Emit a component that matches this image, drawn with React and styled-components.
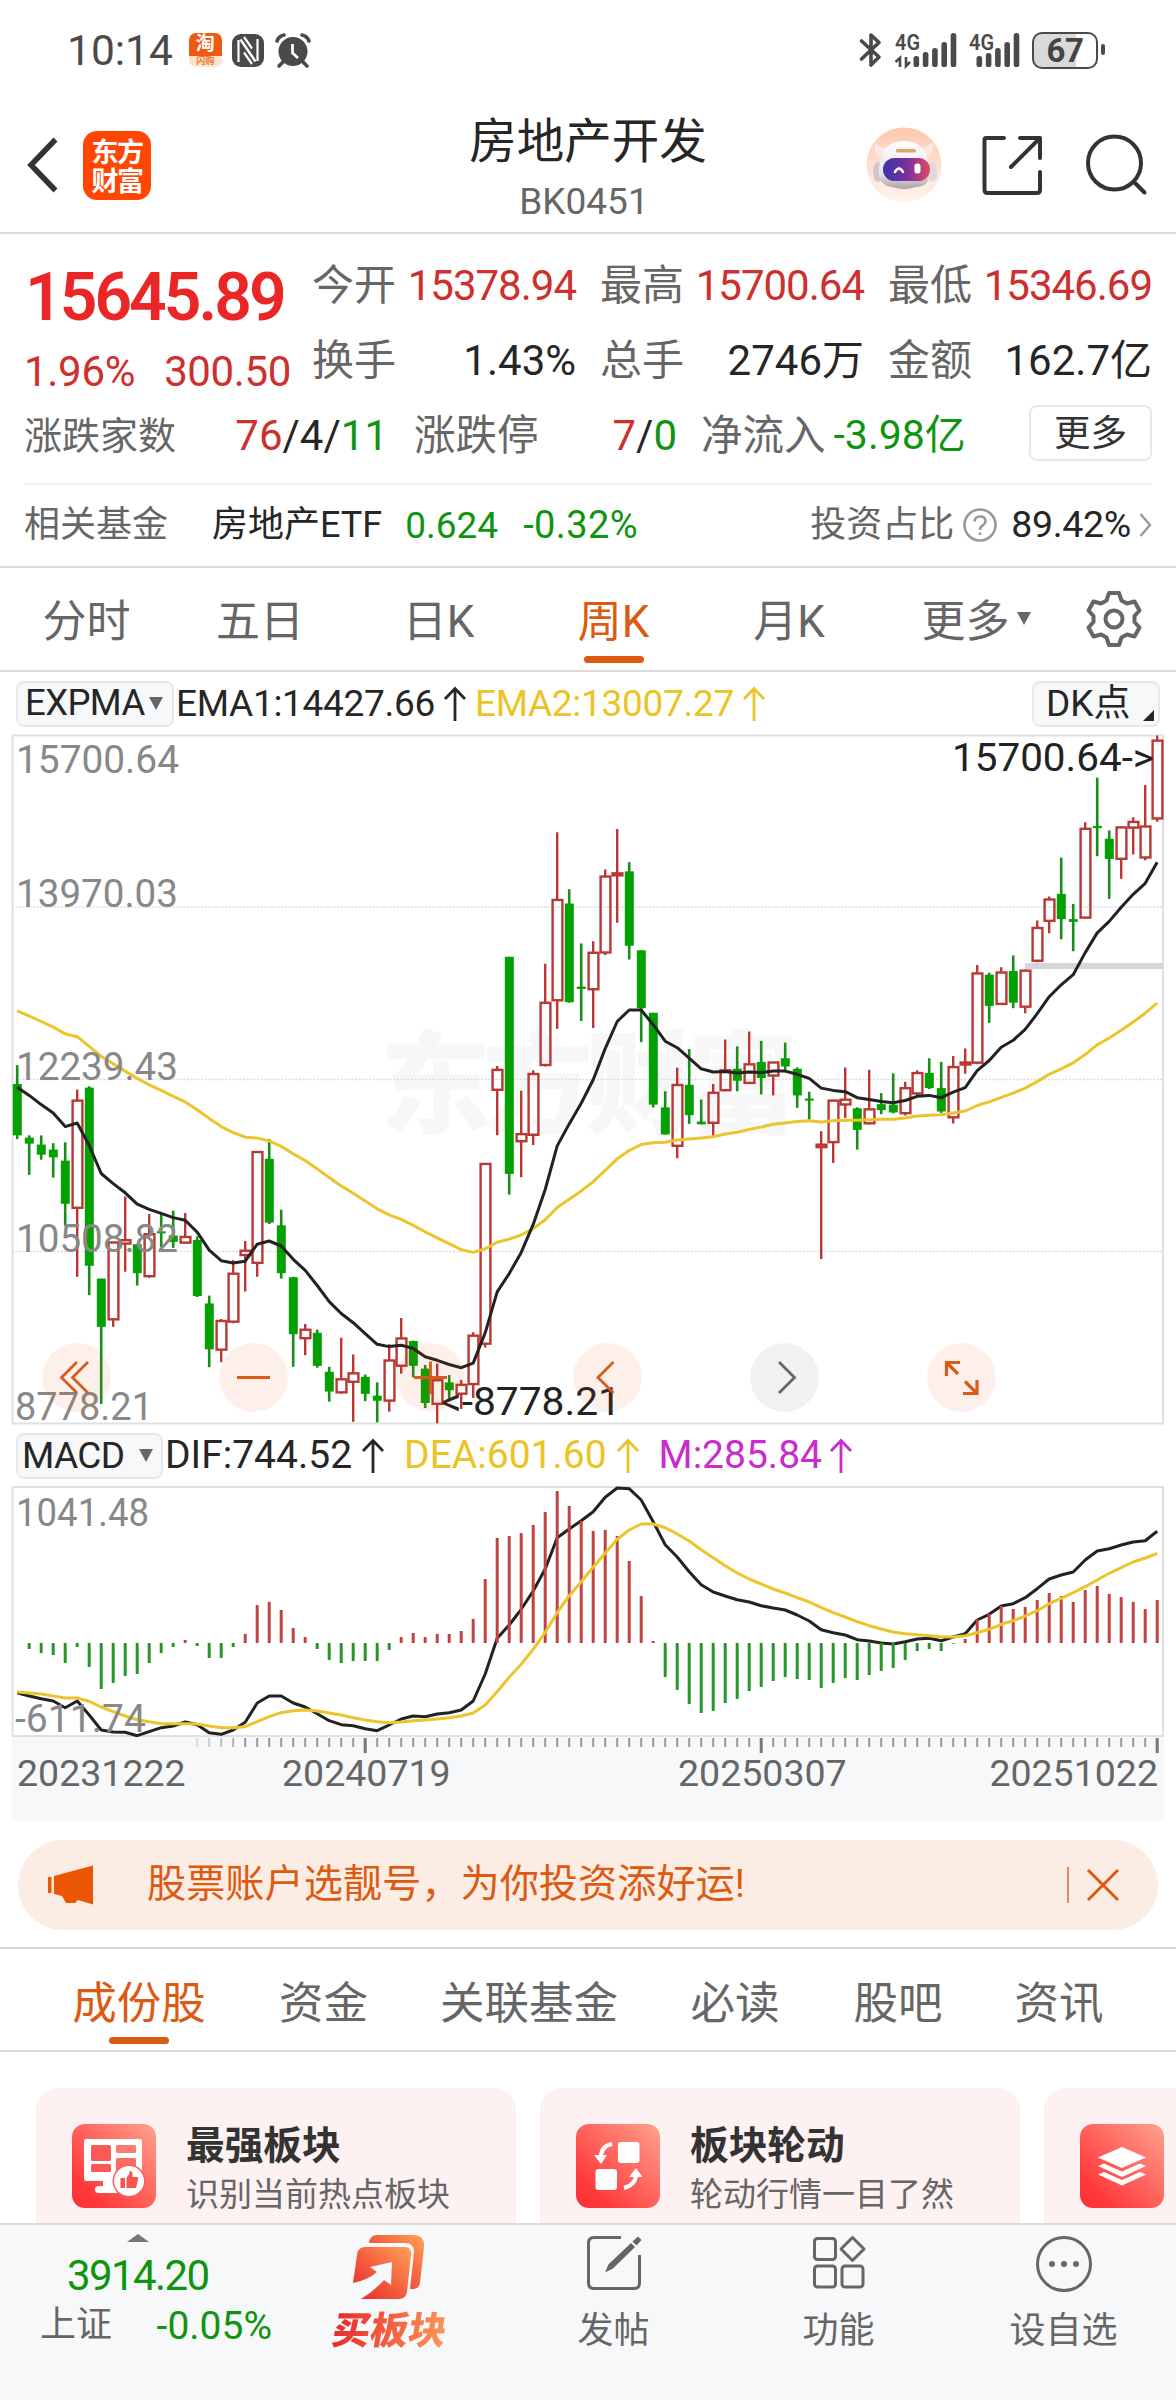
import React from "react";
import styled, { createGlobalStyle, css } from "styled-components";

const color = {
  ink: "#262626",
  dark: "#333",
  grey: "#666",
  mute: "#888",
  red: "#cc302f",
  up: "#ea2626",
  green: "#0f940f",
  orange: "#dc5a12",
  yellow: "#ecc327",
  purple: "#c92bcf",
  line: "#dadada",
  panel: "#f7f8fa",
};

const GlobalStyle = createGlobalStyle`
  * { box-sizing: border-box; }
  html, body { margin: 0; padding: 0; background: #fff; }
  body {
    width: 1176px;
    font-family: Roboto, "Noto Sans CJK SC", sans-serif;
    color: ${color.ink};
    -webkit-font-smoothing: antialiased;
  }
`;

const Screen = styled.main`
  width: 1176px;
  height: 2400px;
  display: flex;
  flex-direction: column;
  overflow: hidden;
  background: #fff;
`;

const Txt = styled.span`
  font-size: ${(p) => p.$s}px;
  color: ${(p) => p.$c || color.ink};
  letter-spacing: ${(p) => p.$ls || 0}px;
  margin-left: ${(p) => p.$ml || 0}px;
  margin-top: ${(p) => p.$mt || 0}px;
  font-weight: ${(p) => p.$w || 400};
  line-height: 1;
  white-space: nowrap;
`;

/* ---------- status bar ---------- */
const StatusBar = styled.div`
  height: 98px;
  flex: none;
  display: flex;
  align-items: center;
  padding: 2px 78px 0 67px;
`;
const StatusLeft = styled.div`
  display: flex;
  align-items: center;
`;
const StatusRight = styled(StatusLeft)`
  margin-left: auto;
`;
const TaoBadge = styled.div`
  width: 33px;
  height: 34px;
  margin-left: 16px;
  border-radius: 7px;
  overflow: hidden;
  display: flex;
  flex-direction: column;
  align-items: center;
  background: #fde3d0;
`;
const TaoTop = styled.span`
  width: 100%;
  height: 23px;
  background: #ef5a12;
  color: #fff;
  font-size: 19px;
  font-weight: 700;
  line-height: 22px;
  text-align: center;
`;
const TaoBottom = styled.span`
  font-size: 9px;
  font-weight: 700;
  line-height: 10px;
  color: #e8772e;
`;
const Gap = styled.svg`
  display: block;
  flex: none;
  overflow: visible;
  margin-left: ${(p) => p.$ml || 0}px;
`;
const Battery = styled.div`
  position: relative;
  width: 66px;
  height: 37px;
  margin-left: 12px;
  border: 2.5px solid #4a4a4a;
  border-radius: 10px;
  background: linear-gradient(90deg, #d9d9d9 67%, #fff 67%);
  display: flex;
  align-items: center;
  justify-content: center;
  &::after {
    content: "";
    position: absolute;
    right: -9px;
    top: 10px;
    width: 4px;
    height: 11px;
    border-radius: 2px;
    background: #4a4a4a;
  }
`;

/* ---------- header ---------- */
const Header = styled.header`
  height: 136px;
  flex: none;
  display: grid;
  grid-template-columns: 1fr 300px 1fr;
  border-bottom: 2px solid ${color.line};
`;
const HeaderLeft = styled.div`
  display: flex;
  align-items: center;
  padding: 0 0 0 26px;
`;
const BrandLogo = styled.div`
  width: 68px;
  height: 69px;
  margin-left: 25px;
  border-radius: 14px;
  background: #ff4603;
  color: #fff;
  font: 700 27px/29px "Noto Sans CJK SC", sans-serif;
  display: grid;
  grid-template-rows: 29px 29px;
  align-content: center;
  justify-content: center;
  letter-spacing: -1.5px;
`;
const HeaderTitle = styled.div`
  display: flex;
  flex-direction: column;
  align-items: center;
  padding-top: 21px;
`;
const HeaderRight = styled.div`
  display: flex;
  align-items: center;
  justify-content: flex-end;
  padding: 0 29px 0 0;
`;

/* ---------- quote ---------- */
const Quote = styled.section`
  flex: none;
  height: 334px;
  padding-top: 14px;
  border-bottom: 2px solid ${color.line};
`;
const QuoteGrid = styled.div`
  display: grid;
  grid-template-columns: repeat(4, 264px);
  grid-template-rows: 75px 75px;
  column-gap: 24px;
  padding-left: 24px;
`;
const PriceCell = styled.div`
  grid-row: span 2;
  padding-top: 17px;
`;
const PriceRow = styled.div`
  display: flex;
  margin-top: ${(p) => p.$mt || 0}px;
  padding-left: ${(p) => p.$pl || 0}px;
`;
const Pair = styled.div`
  display: flex;
  align-items: center;
  justify-content: space-between;
`;
const StatRow = styled.div`
  height: 75px;
  display: flex;
  align-items: center;
  padding: 0 24px;
`;
const StatPair = styled(Pair)`
  width: ${(p) => p.$w}px;
  margin-right: ${(p) => p.$mr}px;
`;
const MoreButton = styled.button`
  width: 123px;
  height: 56px;
  margin: -6px 0 0 auto;
  padding: 0 0 3px;
  background: #fff;
  border: 2px solid #e8e8e8;
  border-radius: 8px;
  font: 36.5px/1 "Noto Sans CJK SC", sans-serif;
  color: ${color.dark};
`;
const FundRow = styled.div`
  height: 82px;
  margin: 10px 24px 0;
  border-top: 2px solid #f4f4f4;
  display: flex;
  align-items: center;
`;
const FundRight = styled.div`
  margin-left: auto;
  display: flex;
  align-items: center;
`;

/* ---------- period tabs ---------- */
const PeriodTabs = styled.nav`
  flex: none;
  height: 104px;
  display: flex;
  align-items: center;
  border-bottom: 2px solid ${color.line};
`;
const tabMark = css`
  &::after {
    content: "";
    position: absolute;
    left: 50%;
    bottom: ${(p) => p.$drop}px;
    width: 60px;
    height: 7px;
    margin-left: -30px;
    border-radius: 4px;
    background: ${color.orange};
  }
`;
const Tab = styled.a`
  position: relative;
  height: 100%;
  display: flex;
  align-items: center;
  justify-content: center;
  width: ${(p) => p.$w}px;
  padding-bottom: ${(p) => p.$pb || 0}px;
  font-size: ${(p) => p.$s}px;
  color: ${(p) => (p.$on ? color.orange : color.grey)};
  white-space: nowrap;
  ${(p) => p.$on && tabMark}
`;
const Down = styled.i`
  margin-left: ${(p) => p.$ml || 7}px;
  border: 7.5px solid transparent;
  border-top: 13px solid ${color.grey};
  border-bottom: 0;
`;

/* ---------- indicators ---------- */
const IndicatorRow = styled.div`
  flex: none;
  height: ${(p) => p.$h}px;
  display: flex;
  align-items: center;
  padding: 0 16px;
`;
const Chip = styled.button`
  position: relative;
  width: ${(p) => p.$w}px;
  height: 46px;
  margin-left: ${(p) => p.$ml || 0};
  padding: 0 0 0 ${(p) => p.$pl}px;
  display: flex;
  align-items: center;
  background: #f6f8fa;
  border: 2px solid #e6e8eb;
  border-radius: 8px;
  font: 37px/1 Roboto, "Noto Sans CJK SC", sans-serif;
  color: ${color.ink};
`;
const Corner = styled.i`
  position: absolute;
  right: 4px;
  bottom: 4px;
  border-left: 11px solid transparent;
  border-bottom: 11px solid ${color.ink};
`;
const ChartSvg = styled.svg`
  display: block;
  flex: none;
  overflow: visible;
  font-family: Roboto, sans-serif;
`;
const Watermark = styled.text`
  font: 900 111px "Noto Sans CJK SC", sans-serif;
  fill: #f7f7f7;
`;
const Axis = styled.div`
  flex: none;
  height: 84px;
  margin: 0 12px;
  background: #f7f8fa;
`;
const AxisLabels = styled.div`
  display: grid;
  grid-template-columns: 265px 396px 1fr auto;
  padding: 1px 6px 0 5px;
`;

/* ---------- notice ---------- */
const Notice = styled.div`
  flex: none;
  height: 90px;
  margin: 19px 18px 17px;
  padding: 0 38px 0 28px;
  border-radius: 45px;
  background: #fcede4;
  display: flex;
  align-items: center;
`;
const NoticeRule = styled.i`
  width: 2px;
  height: 36px;
  margin: 0 17px 0 auto;
  background: #e38a5c;
`;

/* ---------- section tabs + cards ---------- */
const SectionTabs = styled.nav`
  flex: none;
  height: 105px;
  display: flex;
  border-top: 2px solid ${color.line};
  border-bottom: 2px solid ${color.line};
  padding-left: 40px;
`;
const Cards = styled.section`
  flex: 1;
  min-height: 0;
  overflow: hidden;
  display: flex;
  gap: 24px;
  padding: 36px 0 0 36px;
`;
const Card = styled.article`
  flex: none;
  width: 480px;
  height: 156px;
  border-radius: 22px;
  background: #fdf1f1;
  display: flex;
  padding: 36px;
`;
const CardText = styled.div`
  display: flex;
  flex-direction: column;
  gap: 12px;
  padding-top: 3px;
  margin-left: 30px;
`;

/* ---------- bottom bar ---------- */
const BottomBar = styled.footer`
  flex: none;
  height: 177px;
  display: flex;
  background: ${color.panel};
  border-top: 2px solid ${color.line};
`;
const IndexCell = styled.div`
  width: 276px;
  display: flex;
  flex-direction: column;
  align-items: center;
  padding-top: 9px;
`;
const IndexRow = styled.div`
  width: 232px;
  margin: ${(p) => p.$mt}px 0 0 36px;
  display: flex;
  justify-content: space-between;
`;
const UpCaret = styled.i`
  border: 11px solid transparent;
  border-bottom: 8px solid #777;
  border-top: 0;
`;
const NavItem = styled.a`
  width: 225px;
  display: flex;
  flex-direction: column;
  align-items: center;
  padding-top: 10px;
`;
const NavLabel = styled.span`
  margin-top: ${(p) => p.$mt || 22}px;
  font-size: 36px;
  line-height: 1;
  color: ${color.grey};
`;
const BuyLabel = styled.span`
  margin: 6px 0 0 3px;
  padding: 0 4px;
  font: 900 38px/44px "Noto Sans CJK SC", sans-serif;
  transform: skewX(-9deg);
  color: transparent;
  background: linear-gradient(90deg, #e7252a, #ff9a56);
  background-clip: text;
  -webkit-background-clip: text;
`;

/* Each candle: [direction, high, body top, body bottom, low] */
const candles = [
  ["g",752,793,905,913],["g",905,910,923,991],["g",905,925,947,958],["g",922,936,953,997],
  ["g",920,960,1054,1102],["r",805,828,1064,1213],["g",798,801,1189,1253],["g",1217,1217,1322,1490],
  ["r",1137,1137,1307,1322],["r",1038,1132,1142,1202],["g",1142,1142,1205,1232],["r",1076,1119,1213,1215],
  ["g",1075,1114,1118,1148],["g",1069,1123,1137,1150],["r",1074,1125,1140,1140],["g",1125,1133,1255,1257],
  ["g",1254,1271,1371,1410],["r",1305,1308,1373,1399],["r",1177,1205,1312,1314],["r",1135,1155,1167,1245],
  ["r",940,940,1184,1213],["g",913,956,1095,1098],["g",1067,1101,1205,1217],["g",1213,1214,1338,1409],
  ["r",1316,1327,1348,1384],["g",1328,1335,1407,1411],["g",1409,1420,1463,1485],["r",1346,1435,1466,1467],
  ["r",1382,1422,1443,1529],["g",1426,1431,1468,1484],["g",1443,1472,1483,1530],["r",1360,1394,1484,1507],
  ["r",1303,1346,1408,1424],["g",1352,1353,1407,1432],["g",1405,1413,1488,1499],["r",1402,1437,1491,1532],
  ["g",1427,1443,1460,1482],["r",1438,1447,1469,1501],["r",1334,1340,1448,1477],["r",966,966,1360,1367],
  ["r",754,761,807,905],["g",516,516,989,1034],["r",808,901,919,996],["r",763,770,905,926],
  ["r",531,615,753,755],["r",245,391,612,673],["g",369,400,615,616],["g",487,581,586,656],
  ["r",482,506,588,671],["r",326,340,508,512],["r",238,333,340,442],["g",310,330,492,522],
  ["g",502,502,628,702],["g",638,638,838,844],["g",809,844,903,903],["r",758,794,929,955],
  ["g",717,795,861,880],["g",827,875,881,881],["r",793,811,879,910],["r",696,762,808,809],
  ["g",711,760,786,809],["r",679,749,792,792],["g",699,745,780,816],["r",745,745,776,818],
  ["g",703,737,755,766],["g",757,760,818,845],["g",810,825,829,871],["r",896,924,932,1174],
  ["r",828,828,921,965],["r",757,826,839,867],["g",844,846,893,936],["r",762,847,880,881],
  ["g",813,837,850,859],["g",770,838,855,857],["r",788,801,858,862],["r",763,768,815,817],
  ["g",737,769,802,804],["g",745,802,853,856],["r",732,755,867,879],["r",716,745,752,771],
  ["r",534,551,748,750],["g",551,555,623,660],["r",539,549,620,621],["g",513,547,616,628],
  ["r",544,545,626,639],["r",437,452,526,528],["r",385,390,439,465],["g",300,379,434,478],
  ["g",401,434,440,504],["r",223,236,432,433],["g",126,231,236,297],["g",241,259,303,390],
  ["r",232,233,304,346],["r",212,221,236,293],["r",142,231,301,306],["r",34,44,216,222],
];
const ema1 = [800,818,838,856,886,878,927,988,1010,1030,1055,1066,1075,1084,1090,1116,1155,1178,1183,1179,1142,1135,1146,1175,1199,1232,1267,1293,1313,1337,1360,1365,1362,1369,1387,1395,1404,1411,1401,1335,1246,1206,1160,1099,1023,928,880,835,784,716,657,632,632,664,700,714,737,760,767,766,769,767,768,765,765,772,781,802,807,810,823,827,831,834,829,820,818,823,811,801,764,742,713,698,674,640,603,577,555,507,464,439,408,380,356,310];
const ema2 = [634,645,657,669,684,690,711,733,749,765,781,795,807,820,832,849,868,886,899,909,911,917,929,945,960,978,997,1015,1031,1048,1065,1078,1088,1101,1115,1128,1141,1154,1160,1152,1138,1131,1122,1108,1089,1062,1044,1026,1006,981,956,938,925,921,920,915,913,911,908,902,898,892,887,881,878,875,873,876,873,872,872,871,870,870,867,863,861,860,856,852,840,832,822,813,802,788,772,760,747,729,708,693,676,658,639,617];
const macd = [669,687,699,705,729,681,741,807,789,768,762,729,699,681,660,678,714,714,681,642,555,546,570,624,651,687,720,729,723,723,723,690,651,639,651,642,642,633,597,477,354,348,339,315,276,213,258,303,333,330,348,423,528,663,771,810,852,879,873,849,837,813,801,783,771,777,780,804,789,774,780,765,753,744,720,693,687,693,671,657,598,582,558,567,561,540,519,528,546,510,498,522,531,546,567,540];
const dif = [818,828,836,843,863,843,885,930,936,937,947,935,923,918,906,914,938,943,930,907,849,828,828,849,861,881,902,914,917,926,932,915,897,888,890,882,878,870,843,762,655,615,568,513,447,353,327,302,275,232,204,206,240,305,374,411,455,494,516,528,539,546,557,564,570,585,603,629,638,645,659,663,669,672,665,657,655,662,651,641,600,583,558,551,533,506,477,465,456,420,393,386,375,366,362,334];
const dea = [816,819,822,828,834,834,844,861,875,888,899,905,911,911,911,912,918,923,923,920,905,890,878,872,870,873,879,885,893,900,905,908,906,902,900,897,893,888,879,855,815,772,733,688,637,578,527,485,441,400,358,330,312,312,323,342,363,389,413,437,459,477,492,507,519,533,546,563,578,591,605,617,627,636,641,644,647,650,651,647,638,628,613,602,588,572,551,535,518,500,480,460,443,426,414,400];

const X = (i) => 17.2 + 12 * i;
const Y = (v) => (v - 33) / 2.178;
const M = (v) => (v - 201) / 3 + 1;
const line = (arr, fn) => arr.map((v, i) => `${X(i)},${fn(v).toFixed(1)}`).join(" ");

const Fit = ({ x, y, w, c = color.mute, children }) => (
  <text x={x} y={y} fontSize="38.5" fill={c} textLength={w} lengthAdjust="spacingAndGlyphs">
    {children}
  </text>
);

function KLine() {
  return (
    <ChartSvg width="1176" height="690" viewBox="0 0 1176 690">
      <Watermark x="380" y="390" textLength="418">东方财富</Watermark>
      <rect x="12.5" y="0.5" width="1150.5" height="688" fill="none" stroke="#e0e0e0" strokeWidth="2" />
      {[172, 344.5, 516.5].map((y) => (
        <line key={y} x1="12" x2="1163" y1={y} y2={y} stroke="#dcdcdc" strokeWidth="1.3" strokeDasharray="2 1.5" />
      ))}
      <rect x="1025" y="228" width="138" height="6" fill="#d4d6db" />
      {candles.map(([d, h, t, b, l], i) => {
        const x = X(i);
        const top = Y(t);
        const bot = Y(b);
        if (d === "g")
          return (
            <g key={i} fill="#04a004">
              <rect x={x - 1.3} y={Y(h)} width="2.6" height={Y(l) - Y(h)} fill="#16901a" />
              <rect x={x - 4.4} y={top} width="9" height={Math.max(2, bot - top)} />
            </g>
          );
        return (
          <g key={i} fill="none" stroke="#b93734" strokeWidth="2.4">
            <path d={`M${x} ${Y(h)}V${top}M${x} ${bot}V${Y(l)}`} />
            <rect x={x - 4.6} y={top + 0.6} width="9.8" height={Math.max(1.6, bot - top - 1.2)} />
          </g>
        );
      })}
      <polyline points={line(ema2, Y)} fill="none" stroke="#ecc42c" strokeWidth="3" strokeLinejoin="round" />
      <polyline points={line(ema1, Y)} fill="none" stroke="#222" strokeWidth="3" strokeLinejoin="round" />
      <Fit x="16" y="38" w="163">15700.64</Fit>
      <Fit x="16" y="172" w="162">13970.03</Fit>
      <Fit x="16" y="344.5" w="162">12239.43</Fit>
      <Fit x="16" y="517" w="162">10508.82</Fit>
      <Fit x="15" y="685" w="138">8778.21</Fit>
      <Fit x="952" y="36" w="202" c="#222">15700.64-&gt;</Fit>
      <Fit x="441" y="680" w="180" c="#222">&lt;-8778.21</Fit>
      {[76.5, 253.5, 430.5, 607.5, 784.5, 961.5].map((cx) => (
        <circle key={cx} cx={cx} cy="642.5" r="34.4" fill={cx === 784.5 ? "rgba(0,0,0,.055)" : "rgba(236,84,10,.085)"} />
      ))}
      <g fill="none" stroke="#d65c1c" strokeWidth="2.8">
        <path d="M77 627L61.5 642.5L77 658M88 627L72.5 642.5L88 658" />
        <path d="M237 642.5H270" />
        <path d="M414 642.5H447M430.5 626.500V659" />
        <path d="M613.500 627L598 642.5L613.500 658" />
        <path d="M779 627L794.5 642.5L779 658" stroke="#666" />
        <path d="M960 627.500H946.500V641M947 628L958 639M963 658.500H977V645M976.500 658L965 646.500" strokeWidth="3.2" />
      </g>
    </ChartSvg>
  );
}

function Macd() {
  return (
    <ChartSvg width="1176" height="251" viewBox="0 0 1176 251">
      <rect x="12.5" y="1" width="1150.5" height="249" fill="none" stroke="#e0e0e0" strokeWidth="2" />
      <polyline points={line(dif, M)} fill="none" stroke="#222" strokeWidth="3" strokeLinejoin="round" />
      {macd.map((v, i) => {
        const up = v < 669;
        const h = Math.abs(v - 669) / 3;
        return (
          <rect key={i} x={X(i) - 1.5} y={up ? M(v) : 157} width="3" height={h} fill={up ? "#c04340" : "#25962a"} />
        );
      })}
      <polyline points={line(dea, M)} fill="none" stroke="#ecc42c" strokeWidth="3" strokeLinejoin="round" />
      <Fit x="16" y="40" w="133">1041.48</Fit>
      <Fit x="15" y="246" w="131">-611.74</Fit>
    </ChartSvg>
  );
}

function Ticks() {
  return (
    <Gap width="1152" height="17" viewBox="12 0 1152 17">
      {Array.from({ length: 81 }, (_, k) => {
        const i = k + 15;
        const big = i === 29 || i === 62 || i === 95;
        return (
          <rect key={i} x={X(i) - (big ? 1.5 : 1)} y="1" width={big ? 3 : 2} height={big ? 15 : 9} fill={big ? "#777" : "#999"} opacity={k < 4 ? 0.3 + k * 0.15 : 1} />
        );
      })}
    </Gap>
  );
}

const Arrow = ({ c, ml = 10, h = 34 }) => (
  <Gap $ml={ml} width="22" height={h} viewBox="0 0 22 34" fill="none" stroke={c} strokeWidth="2.8">
    <path d="M11 34V1M1 12L11 1.500L21 12" />
  </Gap>
);

const Bars = ({ heights, w }) => (
  <g fill="#4a4a4a">
    {heights.map((h, i) => (
      <rect key={i} x={w + i * 9.300} y={34 - h} width="5.6" height={h} rx="2.600" />
    ))}
  </g>
);

function StatusIcons() {
  return (
    <>
      <Gap width="24" height="34" viewBox="0 0 24 34" fill="none" stroke="#4a4a4a" strokeWidth="3.6" strokeLinejoin="round" strokeLinecap="round">
        <path d="M2.500 8L20 24L12 32V2L20 9.500L2.500 26" />
      </Gap>
      <Gap $ml={12} width="63" height="34" viewBox="0 0 63 34">
        <text x="0" y="17" fontSize="22" fontWeight="600" fill="#4a4a4a" textLength="25" lengthAdjust="spacingAndGlyphs">4G</text>
        <path d="M5 34V25L0.500 29M11 24V33L15 29" fill="none" stroke="#4a4a4a" strokeWidth="2.6" />
        <Bars w={18.500} heights={[11, 15, 19, 25, 34]} />
      </Gap>
      <Gap $ml={11} width="51" height="34" viewBox="0 0 51 34">
        <text x="0" y="17" fontSize="22" fontWeight="600" fill="#4a4a4a" textLength="25" lengthAdjust="spacingAndGlyphs">4G</text>
        <Bars w={7.500} heights={[11, 14, 19, 25, 34]} />
      </Gap>
    </>
  );
}

function Robot() {
  return (
    <Gap width="76" height="76" viewBox="0 0 76 76">
      <defs>
        <linearGradient id="halo" x1="0" y1="0" x2="0" y2="1">
          <stop offset="0" stopColor="#fdc9ae" />
          <stop offset="1" stopColor="#fff5ef" />
        </linearGradient>
        <linearGradient id="visor" x1="0" y1="0" x2="1" y2="0">
          <stop offset="0" stopColor="#3c35a8" />
          <stop offset=".5" stopColor="#7a2f9c" />
          <stop offset="1" stopColor="#e04a62" />
        </linearGradient>
        <linearGradient id="shell" x1="0" y1="0" x2="0" y2="1">
          <stop offset="0" stopColor="#fff" />
          <stop offset=".7" stopColor="#e6e1e4" />
          <stop offset="1" stopColor="#a8a0a6" />
        </linearGradient>
      </defs>
      <circle cx="38" cy="38" r="37.500" fill="url(#halo)" />
      <path d="M13 30Q6 24 10 16Q14 22 22 20ZM62 30Q69 24 66 15Q61 22 53 20Z" fill="#fbe9e3" />
      <ellipse cx="12" cy="45" rx="5" ry="10" fill="#cfc7cc" />
      <ellipse cx="66" cy="45" rx="5" ry="10" fill="#e0d8dc" />
      <path d="M14 34Q18 14 38 14Q58 14 62 34Q68 60 50 60Q38 64 26 60Q9 58 14 34Z" fill="url(#shell)" />
      <rect x="30" y="22" width="20" height="3.500" rx="1.500" fill="#e0a26e" />
      <rect x="17" y="31" width="47" height="23" rx="11.500" fill="url(#visor)" />
      <path d="M29 45Q33 38 37 45" fill="none" stroke="#fff" strokeWidth="2.5" strokeLinecap="round" />
      <rect x="48.500" y="36.500" width="6" height="10" rx="2.500" fill="#fff" />
    </Gap>
  );
}

const iconGrad = (id) => (
  <defs>
    <linearGradient id={id} x1="0" y1="1" x2="1" y2="0">
      <stop offset="0" stopColor="#ff2c33" />
      <stop offset=".2" stopColor="#ff3a3c" />
      <stop offset="1" stopColor="#ffa28e" />
    </linearGradient>
  </defs>
);

const BoardIcon = () => (
  <Gap width="84" height="84" viewBox="0 0 84 84">
    {iconGrad("b1")}
    <rect width="84" height="84" rx="13" fill="url(#b1)" />
    <rect x="12" y="15" width="58" height="42" rx="2.500" fill="#fff" />
    <g fill="#fb5955">
      <rect x="19" y="21" width="20" height="16" rx="1.500" />
      <rect x="44" y="21" width="20" height="8" rx="1.500" fill="#fd7a70" />
      <rect x="44" y="34" width="20" height="17" rx="1.500" fill="#fd6c64" />
      <rect x="19" y="40" width="20" height="8" rx="1.500" />
    </g>
    <path d="M27 57H38V60H27Z" fill="#fd5451" />
    <rect x="31" y="57" width="11" height="8" fill="#fff" />
    <rect x="23" y="62" width="30" height="7" rx="3.500" fill="#fff" />
    <circle cx="57" cy="57" r="16.500" fill="#fb5f5a" />
    <circle cx="57" cy="57" r="15" fill="#fff" />
    <path d="M48.500 54H53V64H48.500ZM54.500 54L57.500 49.500V47Q60.500 46.500 60.500 50V53H65.500Q66.500 53.500 65.500 58L64 64H54.500Z" fill="#f9534f" />
  </Gap>
);

const RotateIcon = () => (
  <Gap width="84" height="84" viewBox="0 0 84 84">
    {iconGrad("b2")}
    <rect width="84" height="84" rx="13" fill="url(#b2)" />
    <g fill="#fff">
      <rect x="42" y="18" width="21.500" height="21" rx="3" />
      <rect x="19.500" y="45" width="21.500" height="21" rx="3" />
      <path d="M18 31H31L25 40ZM53 53H66.500L60 44Z" />
    </g>
    <path d="M25 32Q25.500 22 36 20M60 52Q59 61 48 64" fill="none" stroke="#fff" strokeWidth="4" />
  </Gap>
);

const StackIcon = () => (
  <Gap width="84" height="84" viewBox="0 0 84 84">
    {iconGrad("b3")}
    <rect width="84" height="84" rx="13" fill="url(#b3)" />
    <g fill="#fff">
      <path d="M42 23L66 33.500L42 44L18 33.500Z" />
      <path d="M18 42L24 39.500L42 47.500L60 39.500L66 42L42 53Z" />
      <path d="M18 50.500L24 48L42 56L60 48L66 50.500L42 61.500Z" />
    </g>
  </Gap>
);

const BuyIcon = () => (
  <Gap width="72" height="65" viewBox="0 0 72 65">
    <defs>
      <linearGradient id="buy" x1="0" y1="1" x2="1" y2="0">
        <stop offset="0" stopColor="#e8252a" />
        <stop offset=".5" stopColor="#f4603f" />
        <stop offset="1" stopColor="#ffa255" />
      </linearGradient>
    </defs>
    <path d="M16 8Q17 0 24 0H60Q72 0 71 12L67 48Q66 54 60 54H57L61 17Q61 8 52 8Z" fill="url(#buy)" />
    <path d="M4 20Q5 12 12 12H52Q59 12 58 20L54 57Q53 64 46 64H8Q20 57 31 45L38 50L39 27L17 32L24 37Q15 45 0 48Z" fill="url(#buy)" />
  </Gap>
);

export default function App() {
  return (
    <Screen>
      <GlobalStyle />
      <StatusBar>
        <StatusLeft>
          <Txt $s={42.5} $c="#4a4a4a" $mt={2}>10:14</Txt>
          <TaoBadge>
            <TaoTop>淘</TaoTop>
            <TaoBottom>闪购</TaoBottom>
          </TaoBadge>
          <Gap $ml={10} width="32" height="33" viewBox="0 0 32 33">
            <rect width="32" height="33" rx="9" fill="#4a4a4a" />
            <path d="M6.500 28V6M25.500 27V5" fill="none" stroke="#fff" strokeWidth="2.200" />
            <path d="M8.500 5.500L23.500 27.500" stroke="#fff" strokeWidth="2.400" />
            <path d="M12 3L20 14.500M12 18.500L20 30" stroke="#fff" strokeWidth="2.200" />
          </Gap>
          <Gap $ml={11} width="36" height="35" viewBox="0 0 36 35">
            <circle cx="18" cy="18.500" r="14.500" fill="#4a4a4a" />
            <path d="M2 8Q4 3 9 2M34 8Q32 3 27 2M8 29L4 33M28 29L32 33" stroke="#4a4a4a" strokeWidth="3.600" fill="none" strokeLinecap="round" />
            <path d="M17.500 11V20L23 25" stroke="#fff" strokeWidth="2.800" fill="none" />
          </Gap>
        </StatusLeft>
        <StatusRight>
          <StatusIcons />
          <Battery>
            <Txt $s={33} $c="#444" $w={700} $ls={-0.5}>67</Txt>
          </Battery>
        </StatusRight>
      </StatusBar>

      <Header>
        <HeaderLeft>
          <Gap width="32" height="56" viewBox="0 0 32 56" fill="none" stroke="#333" strokeWidth="5.500">
            <path d="M29.500 2.500L5 28L29.500 53.500" />
          </Gap>
          <BrandLogo>
            <span>东方</span>
            <span>财富</span>
          </BrandLogo>
        </HeaderLeft>
        <HeaderTitle>
          <Txt $s={47.5}>房地产开发</Txt>
          <Txt $s={37} $c={color.grey} $ml={-8} $mt={16}>BK0451</Txt>
        </HeaderTitle>
        <HeaderRight>
          <Robot />
          <Gap $ml={40} width="62" height="62" viewBox="0 0 62 62" fill="none" stroke="#333" strokeWidth="4" strokeLinejoin="round" strokeLinecap="round">
            <path d="M22 4H4Q2.500 4 2.500 6V56Q2.500 59 5.500 59H55Q58 59 58 56V38M38 4H58V24M57 5L29 33" />
          </Gap>
          <Gap $ml={41} width="62" height="62" viewBox="0 0 62 62" fill="none" stroke="#333" strokeWidth="4" strokeLinecap="round">
            <circle cx="29.500" cy="29" r="26.500" />
            <path d="M49 48L59.500 58.500" />
          </Gap>
        </HeaderRight>
      </Header>

      <Quote>
        <QuoteGrid>
          <PriceCell>
            <PriceRow $pl={1}>
              <Txt $s={66} $c={color.up} $w={600} $ls={-3}>15645.89</Txt>
            </PriceRow>
            <PriceRow $mt={20}>
              <Txt $s={42} $c={color.red} $ls={-0.3}>1.96%</Txt>
              <Txt $s={42} $c={color.red} $ls={-0.4} $ml={29}>300.50</Txt>
            </PriceRow>
          </PriceCell>
          <Pair><Txt $s={42} $c={color.grey}>今开</Txt><Txt $s={42} $c={color.red} $ls={-1}>15378.94</Txt></Pair>
          <Pair><Txt $s={42} $c={color.grey}>最高</Txt><Txt $s={42} $c={color.red} $ls={-1}>15700.64</Txt></Pair>
          <Pair><Txt $s={42} $c={color.grey}>最低</Txt><Txt $s={42} $c={color.red} $ls={-1}>15346.69</Txt></Pair>
          <Pair><Txt $s={42} $c={color.grey}>换手</Txt><Txt $s={42}>1.43%</Txt></Pair>
          <Pair><Txt $s={42} $c={color.grey}>总手</Txt><Txt $s={42}>2746万</Txt></Pair>
          <Pair><Txt $s={42} $c={color.grey}>金额</Txt><Txt $s={42}>162.7亿</Txt></Pair>
        </QuoteGrid>
        <StatRow>
          <StatPair $w={364} $mr={26}>
            <Txt $s={38} $c={color.grey}>涨跌家数</Txt>
            <span>
              <Txt $s={42} $c={color.red}>76</Txt><Txt $s={42}>/4/</Txt><Txt $s={42} $c={color.green}>11</Txt>
            </span>
          </StatPair>
          <StatPair $w={263} $mr={24}>
            <Txt $s={41.5} $c={color.grey}>涨跌停</Txt>
            <span>
              <Txt $s={42} $c={color.red}>7</Txt><Txt $s={42}>/</Txt><Txt $s={42} $c={color.green}>0</Txt>
            </span>
          </StatPair>
          <Txt $s={41.5} $c={color.grey}>净流入</Txt>
          <Txt $s={41} $c={color.green} $ml={8}>-3.98亿</Txt>
          <MoreButton>更多</MoreButton>
        </StatRow>
        <FundRow>
          <Txt $s={36} $c={color.grey}>相关基金</Txt>
          <Txt $s={36} $ml={44}>房地产ETF</Txt>
          <Txt $s={37} $c={color.green} $ml={23}>0.624</Txt>
          <Txt $s={38} $c={color.green} $ml={25} $ls={0.4}>-0.32%</Txt>
          <FundRight>
            <Txt $s={36} $c={color.grey}>投资占比</Txt>
            <Gap $ml={8} width="36" height="36" viewBox="0 0 36 36" fill="none" stroke="#999" strokeWidth="2.600">
              <circle cx="18" cy="18" r="15.500" />
              <path d="M12.500 14.500Q13 9.500 18 9.500Q23.500 9.500 23.500 14Q23.500 16.500 20.500 18.500Q18 20 18 23M18 25.500V28" />
            </Gap>
            <Txt $s={37.5} $ml={13} $ls={-0.3}>89.42%</Txt>
            <Gap $ml={8} width="13" height="26" viewBox="0 0 13 26" fill="none" stroke="#999" strokeWidth="2.400">
              <path d="M1.500 2L11 13L1.500 24" />
            </Gap>
          </FundRight>
        </FundRow>
      </Quote>

      <PeriodTabs>
        <Tab $w={173} $pb={2} $s={44}>分时</Tab>
        <Tab $w={174} $pb={2} $s={44}>五日</Tab>
        <Tab $w={183} $pb={2} $s={44}>日K</Tab>
        <Tab $w={167} $pb={2} $s={44} $on $drop={7}>周K</Tab>
        <Tab $w={184} $pb={2} $s={44}>月K</Tab>
        <Tab $w={190} $pb={2} $s={44}>更多<Down /></Tab>
        <Gap $ml={15} width="56" height="58" viewBox="0 0 56 58" fill="none" stroke="#666" strokeWidth="4" strokeLinejoin="round">
          <path d="M23 3H33L35.500 10.500L41 13.500L48.500 11.500L53.500 20.500L48.500 26V32L53.500 37.500L48.500 46.500L41 44.500L35.500 47.500L33 55H23L20.500 47.500L15 44.500L7.500 46.500L2.500 37.500L7.500 32V26L2.500 20.500L7.500 11.500L15 13.500L20.500 10.500Z" />
          <circle cx="28" cy="29" r="8.500" />
        </Gap>
      </PeriodTabs>

      <IndicatorRow $h={63}>
        <Chip $w={158} $pl={7}>
          <Txt $s={36.5} $ls={-0.6}>EXPMA</Txt><Down $ml={4} />
        </Chip>
        <Txt $s={37} $ml={2} $ls={-0.3}>EMA1:14427.66</Txt><Arrow c={color.ink} ml={9} />
        <Txt $s={37} $ml={9} $ls={-0.3} $c={color.yellow}>EMA2:13007.27</Txt><Arrow c={color.yellow} ml={9} />
        <Chip $w={128} $pl={12} $ml="auto">
          <Txt $s={37}>DK点</Txt><Corner />
        </Chip>
      </IndicatorRow>
      <KLine />
      <IndicatorRow $h={61}>
        <Chip $w={147} $pl={4}>
          <Txt $s={37} $ls={-0.6}>MACD</Txt><Down $ml={14} />
        </Chip>
        <Txt $s={39} $ml={2}>DIF:744.52</Txt><Arrow c={color.ink} />
        <Txt $s={39} $ml={20} $c={color.yellow}>DEA:601.60</Txt><Arrow c={color.yellow} />
        <Txt $s={39} $ml={20} $c={color.purple}>M:285.84</Txt><Arrow c={color.purple} ml={8} />
      </IndicatorRow>
      <Macd />
      <Axis>
        <Ticks />
        <AxisLabels>
          <Txt $s={37.5} $c={color.grey}>20231222</Txt>
          <Txt $s={37.5} $c={color.grey}>20240719</Txt>
          <Txt $s={37.5} $c={color.grey}>20250307</Txt>
          <Txt $s={37.5} $c={color.grey}>20251022</Txt>
        </AxisLabels>
      </Axis>

      <Notice>
        <Gap width="48" height="40" viewBox="0 0 48 40" fill="#ec5504">
          <path d="M2 12H5.500V28H2ZM8 11L47 0.500V39.500L32 35L29 38H20L16 31L8 29Z" />
        </Gap>
        <Txt $s={39.2} $c={color.orange} $ml={53}>股票账户选靓号，为你投资添好运!</Txt>
        <NoticeRule />
        <Gap width="34" height="34" viewBox="0 0 34 34" stroke={color.orange} strokeWidth="3">
          <path d="M2 2L32 32M32 2L2 32" />
        </Gap>
      </Notice>

      <SectionTabs>
        <Tab $w={198} $s={44.5} $on $drop={6}>成份股</Tab>
        <Tab $w={171} $s={44.5}>资金</Tab>
        <Tab $w={240} $s={44.5}>关联基金</Tab>
        <Tab $w={172} $s={44.5}>必读</Tab>
        <Tab $w={154} $s={44.5}>股吧</Tab>
        <Tab $w={168} $s={44.5}>资讯</Tab>
      </SectionTabs>

      <Cards>
        <Card>
          <BoardIcon />
          <CardText>
            <Txt $s={38.7} $c={color.dark} $w={700}>最强板块</Txt>
            <Txt $s={33} $c={color.grey}>识别当前热点板块</Txt>
          </CardText>
        </Card>
        <Card>
          <RotateIcon />
          <CardText>
            <Txt $s={38.7} $c={color.dark} $w={700}>板块轮动</Txt>
            <Txt $s={33} $c={color.grey}>轮动行情一目了然</Txt>
          </CardText>
        </Card>
        <Card>
          <StackIcon />
        </Card>
      </Cards>

      <BottomBar>
        <IndexCell>
          <UpCaret />
          <IndexRow $mt={13}>
            <Txt $s={42} $c={color.green} $ml={27} $ls={-1.6}>3914.20</Txt>
          </IndexRow>
          <IndexRow $mt={10}>
            <Txt $s={36} $c={color.grey}>上证</Txt>
            <Txt $s={39} $c={color.green}>-0.05%</Txt>
          </IndexRow>
        </IndexCell>
        <NavItem>
          <BuyIcon />
          <BuyLabel>买板块</BuyLabel>
        </NavItem>
        <NavItem>
          <Gap width="56" height="56" viewBox="0 0 56 56" fill="none" stroke="#666" strokeWidth="3">
            <path d="M35 2.500H8Q2.500 2.500 2.500 8V48Q2.500 53.500 8 53.500H48Q53.500 53.500 53.500 48V20" />
            <path d="M20.500 36L23 30L45 9L48 12L26.500 33ZM47.500 6.500L52 2.500L54.500 5L50.500 9.500Z" fill="#666" strokeWidth="1.500" />
          </Gap>
          <NavLabel>发帖</NavLabel>
        </NavItem>
        <NavItem>
          <Gap width="56" height="56" viewBox="0 0 56 56" fill="none" stroke="#666" strokeWidth="3">
            <rect x="3.500" y="3.500" width="21" height="21" rx="3" />
            <rect x="3.500" y="31" width="21" height="21" rx="3" />
            <rect x="31" y="31" width="21" height="21" rx="3" />
            <path d="M41.500 2.500L53 14L41.500 25.500L30 14Z" strokeLinejoin="round" />
          </Gap>
          <NavLabel>功能</NavLabel>
        </NavItem>
        <NavItem>
          <Gap width="58" height="58" viewBox="0 0 58 58" fill="none" stroke="#666" strokeWidth="3">
            <circle cx="29" cy="29" r="26.500" />
            <g fill="#666" stroke="none">
              <circle cx="17" cy="29" r="3" />
              <circle cx="29" cy="29" r="3" />
              <circle cx="41" cy="29" r="3" />
            </g>
          </Gap>
          <NavLabel $mt={20}>设自选</NavLabel>
        </NavItem>
      </BottomBar>
    </Screen>
  );
}
